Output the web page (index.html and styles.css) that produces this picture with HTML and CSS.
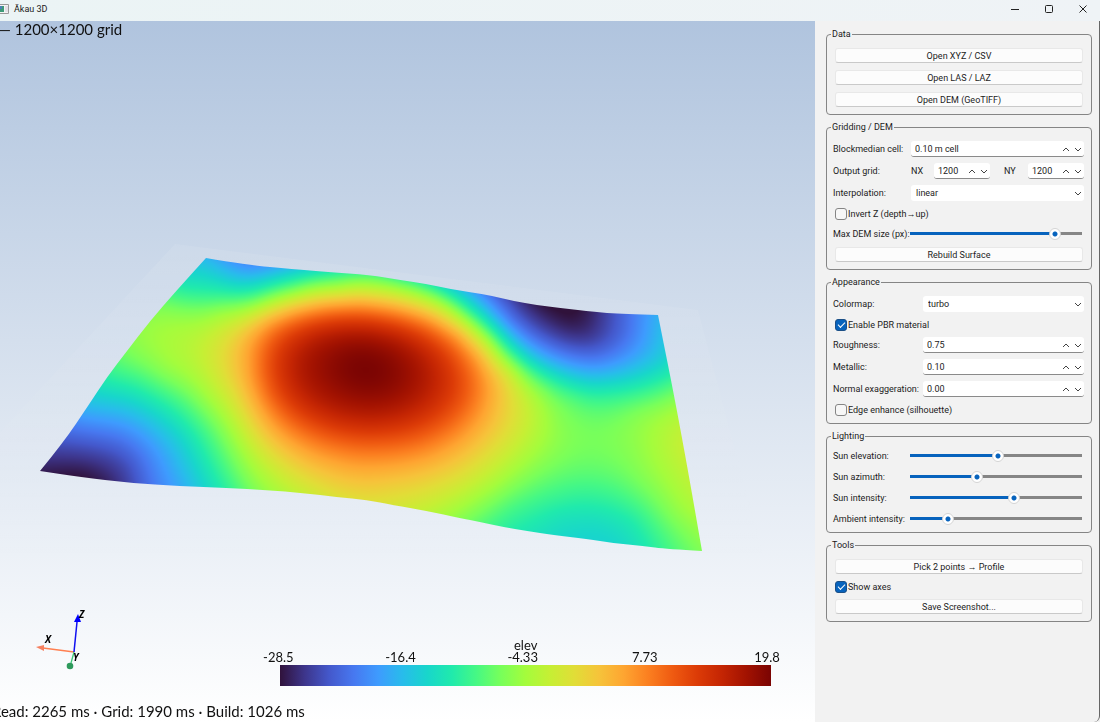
FILE: index.html
```html
<!DOCTYPE html>
<html lang="en">
<head>
<meta charset="utf-8">
<title>Ākau 3D</title>
<link rel="stylesheet" href="styles.css">
</head>
<body>
<header class="titlebar">
  <svg class="app-icon" width="10" height="10" viewBox="0 0 10 10" aria-hidden="true"><path d="M0 .5H8.500V9.500H0" fill="#f4f4f4" stroke="#999"/><path d="M0 2H4V8H0Z" fill="#3d9a78"/><path d="M0 2H2V5H0Z" fill="#4a7fb5"/><path d="M5 2H8V8H5Z" fill="#e2dfe6"/></svg>
  <h1 class="title">Ākau 3D</h1>
  <div class="window-buttons">
    <button class="window-button" aria-label="Minimize"><svg width="10" height="10" viewBox="0 0 10 10"><path d="M1 5.500H9"/></svg></button>
    <button class="window-button" aria-label="Maximize"><svg width="10" height="10" viewBox="0 0 10 10"><rect x="1.500" y="1.500" width="7" height="7" rx="1"/></svg></button>
    <button class="window-button" aria-label="Close"><svg width="10" height="10" viewBox="0 0 10 10"><path d="M1.500 1.500L8.500 8.500M8.500 1.500L1.500 8.500"/></svg></button>
  </div>
</header>
<main class="workspace">
  <section class="viewport" aria-label="3D view">
    <canvas class="scene" id="scene" width="815" height="701"></canvas>
    <p class="caption">— 1200×1200 grid</p>
    <svg class="axes" width="60" height="70" viewBox="30 606 60 70" aria-label="Axes">
      <path d="M74 652L43 648" stroke="#ff7f50" stroke-width="1.300"/>
      <path d="M36 647L44 645V651Z" fill="#f58060"/>
      <path d="M74 652L71 663" stroke="#3cc878" stroke-width="1.300"/>
      <circle cx="70" cy="666" r="3.300" fill="#2e9a5c"/>
      <path d="M74 652L77 622" stroke="#1010f0" stroke-width="1.500"/>
      <path d="M78 614L81 622H74Z" fill="#0000ff"/>
      <text x="45" y="643">X</text><text x="79" y="618">Z</text><text x="73" y="661">Y</text>
    </svg>
    <div class="scalebar">
      <div class="scalebar-title">elev</div>
      <div class="ticks"><span>-28.5</span><span>-16.4</span><span>-4.33</span><span>7.73</span><span>19.8</span></div>
      <div class="ramp"></div>
    </div>
    <p class="status">Read: 2265 ms · Grid: 1990 ms · Build: 1026 ms</p>
  </section>
  <aside class="panel">
    <fieldset class="group buttons-group">
      <legend>Data</legend>
      <button class="button">Open XYZ / CSV</button>
      <button class="button">Open LAS / LAZ</button>
      <button class="button">Open DEM (GeoTIFF)</button>
    </fieldset>
    <fieldset class="group">
      <legend>Gridding / DEM</legend>
      <div class="row"><label for="cell">Blockmedian cell:</label>
        <div class="spin"><input id="cell" value="0.10 m cell"><svg class="arrows" viewBox="0 0 20 8"><path d="M1 6L4 3L7 6M13 3L16 6L19 3"/></svg></div></div>
      <div class="row"><span>Output grid:</span>
        <div class="pair">
          <label for="nx">NX</label><div class="spin"><input id="nx" value="1200"><svg class="arrows" viewBox="0 0 20 8"><path d="M1 6L4 3L7 6M13 3L16 6L19 3"/></svg></div>
          <label class="second" for="ny">NY</label><div class="spin"><input id="ny" value="1200"><svg class="arrows" viewBox="0 0 20 8"><path d="M1 6L4 3L7 6M13 3L16 6L19 3"/></svg></div>
        </div></div>
      <div class="row"><label for="interp">Interpolation:</label>
        <div class="combo"><select id="interp"><option>linear</option></select><svg class="arrow" viewBox="0 0 8 8"><path d="M1 3L4 6L7 3"/></svg></div></div>
      <label class="check"><input type="checkbox">Invert Z (depth→up)</label>
      <div class="row slider-row"><label for="dem">Max DEM size (px):</label><input class="slider" id="dem" type="range" value="87" style="--fill:87%"></div>
      <button class="button">Rebuild Surface</button>
    </fieldset>
    <fieldset class="group wide-labels">
      <legend>Appearance</legend>
      <div class="row"><label for="cmap">Colormap:</label>
        <div class="combo"><select id="cmap"><option>turbo</option></select><svg class="arrow" viewBox="0 0 8 8"><path d="M1 3L4 6L7 3"/></svg></div></div>
      <label class="check"><input type="checkbox" checked>Enable PBR material</label>
      <div class="row"><label for="rough">Roughness:</label>
        <div class="spin"><input id="rough" value="0.75"><svg class="arrows" viewBox="0 0 20 8"><path d="M1 6L4 3L7 6M13 3L16 6L19 3"/></svg></div></div>
      <div class="row"><label for="metal">Metallic:</label>
        <div class="spin"><input id="metal" value="0.10"><svg class="arrows" viewBox="0 0 20 8"><path d="M1 6L4 3L7 6M13 3L16 6L19 3"/></svg></div></div>
      <div class="row"><label for="exag">Normal exaggeration:</label>
        <div class="spin"><input id="exag" value="0.00"><svg class="arrows" viewBox="0 0 20 8"><path d="M1 6L4 3L7 6M13 3L16 6L19 3"/></svg></div></div>
      <label class="check"><input type="checkbox">Edge enhance (silhouette)</label>
    </fieldset>
    <fieldset class="group lighting">
      <legend>Lighting</legend>
      <div class="row slider-row"><label for="elev">Sun elevation:</label><input class="slider" id="elev" type="range" value="51" style="--fill:51%"></div>
      <div class="row slider-row"><label for="azim">Sun azimuth:</label><input class="slider" id="azim" type="range" value="38" style="--fill:38%"></div>
      <div class="row slider-row"><label for="sun">Sun intensity:</label><input class="slider" id="sun" type="range" value="61" style="--fill:61%"></div>
      <div class="row slider-row"><label for="amb">Ambient intensity:</label><input class="slider" id="amb" type="range" value="20" style="--fill:20%"></div>
    </fieldset>
    <fieldset class="group">
      <legend>Tools</legend>
      <button class="button">Pick 2 points → Profile</button>
      <label class="check"><input type="checkbox" checked>Show axes</label>
      <button class="button">Save Screenshot...</button>
    </fieldset>
  </aside>
</main>
<script src="scene.js"></script>
</body>
</html>
```
FILE: styles.css
```css
* { box-sizing: border-box; }
body {
  margin: 0;
  min-height: 100vh;
  display: flex;
  flex-direction: column;
  background: #f2f2f2;
  color: #1c1c1c;
  font: 9px/12px "Roboto", "Open Sans", sans-serif;
}
input, select, button { font: inherit; color: inherit; margin: 0; }
svg { fill: none; }
p { margin: 0; }

.titlebar {
  display: flex;
  align-items: center;
  height: 21px;
  padding-bottom: 3px;
  background: linear-gradient(90deg, #ebf4f5, #eff3f6);
}
.app-icon { flex: none; }
.title { margin: 0 0 0 4px; font-size: 9px; font-weight: 400; }
.window-buttons { display: flex; margin-left: auto; }
.window-button {
  display: grid;
  place-items: center;
  width: 34px;
  height: 18px;
  padding: 0;
  border: 0;
  background: none;
  stroke: #222;
}

.workspace { flex: 1; display: flex; }
.viewport {
  position: relative;
  flex: 1;
  overflow: hidden;
  background: linear-gradient(#b0c4de, #fff);
  font: 15px/18px "Lato", sans-serif;
  color: #111;
}
.scene { position: absolute; inset: 0; width: 100%; height: 100%; }
.caption, .status { position: absolute; white-space: nowrap; }
.caption { top: -1px; left: -1px; }
.status { bottom: 2px; left: -8px; }
.axes { position: absolute; left: 30px; bottom: 46px; }
.axes text { font: italic bold 10px "Open Sans", sans-serif; fill: #000; }
.scalebar { position: absolute; left: 34.4%; right: 5.4%; bottom: 36px; }
.scalebar-title { text-align: center; font-size: 13px; line-height: 10px; }
.ticks {
  display: flex;
  justify-content: space-between;
  margin: 0 -16px 0 -22px;
  font-size: 13px;
  line-height: 15px;
  text-align: center;
}
.ticks span { width: 40px; }
.ramp {
  height: 21px;
  background: linear-gradient(90deg, #30123b, #3d358b 5%, #4458cb 10%, #4778f0 15%, #3e9bfe 20%, #28bceb 25%, #18d6cb 30%, #20eaac 35%, #46f884 40%, #78ff5a 45%, #a4fc3c 50%, #c6ef34 55%, #e1dd37 60%, #f6c33a 65%, #fea531 70%, #fb7f20 75%, #ef5a11 80%, #dc3b07 85%, #c42503 90%, #a21201 95%, #7a0403);
}

.panel {
  flex: none;
  width: 285px;
  padding: 7px 7px 7px 11px;
  border-right: 1px solid #666;
  border-bottom-right-radius: 6px;
  display: flex;
  flex-direction: column;
  gap: 6px;
}
.group {
  display: flex;
  flex-direction: column;
  gap: 6px;
  min-width: 0;
  margin: 0;
  padding: 8px 7px 7px 6px;
  border: 1px solid #858585;
  border-radius: 4px;
}
.buttons-group { gap: 7px; }
.lighting { padding-top: 6px; padding-bottom: 6px; }
legend { margin-left: -2px; padding: 0 1px; line-height: 12px; }
.button {
  height: 15px;
  margin: 0 1px 0 2px;
  padding: 0;
  border: 1px solid #e8e8e8;
  border-bottom-color: #c9c9c9;
  border-radius: 3px;
  background: #fcfcfc;
  line-height: 12px;
}
.row {
  display: grid;
  grid-template-columns: 78px 1fr;
  align-items: center;
  height: 16px;
  white-space: nowrap;
}
.wide-labels .row { grid-template-columns: 90px 1fr; }
.slider-row { height: 15px; grid-template-columns: 77px 1fr; }
.pair { display: grid; grid-template-columns: 23px 1fr 38px 1fr; align-items: center; }
.second { padding-left: 14px; }
.spin, .combo {
  display: flex;
  align-items: center;
  min-width: 0;
  height: 16px;
  border-radius: 3px;
  background: #fff;
}
.spin { border-bottom: 1px solid #8a8a8a; }
.spin input {
  flex: 1;
  width: 0;
  height: 15px;
  padding: 0 0 0 4px;
  border: 0;
  background: none;
}
.arrows { width: 20px; height: 8px; margin-right: 2px; stroke: #444; flex: none; }
.arrow { width: 8px; height: 8px; margin-right: 2px; stroke: #444; flex: none; }
.combo select {
  flex: 1;
  height: 16px;
  padding: 0 0 0 5px;
  border: 0;
  background: none;
  appearance: none;
}
.check { display: flex; align-items: center; height: 13px; padding-left: 2px; white-space: nowrap; }
.check input {
  appearance: none;
  display: grid;
  place-items: center;
  width: 12px;
  height: 12px;
  margin-right: 1px;
  border: 1px solid #858585;
  border-radius: 3px;
  background: #f7f7f7;
}
.check input:checked { background: #0763bd; border-color: #1c4f86; }
.check input:checked::before {
  content: "";
  width: 6px;
  height: 3px;
  margin-bottom: 2px;
  border: solid #fff;
  border-width: 0 0 1px 1px;
  transform: rotate(-45deg);
}
.slider {
  appearance: none;
  width: calc(100% - 2px);
  height: 12px;
  background: linear-gradient(90deg, #0763bd var(--fill), #868686 var(--fill)) center / 100% 3px no-repeat;
}
.slider::-webkit-slider-thumb {
  appearance: none;
  width: 12px;
  height: 12px;
  border: 1px solid #d5d5d5;
  border-radius: 50%;
  background: radial-gradient(circle, #0763bd 2px, #fff 3px);
}
```
FILE: scene.js
```js
// Elevation samples in view space: x, y, normalised height.
const samples = [
  207,259,.26, 247,267,.19, 293,270,.28, 327,273,.36, 370,275,.42, 187,282,.32, 177,293,.38,
  163,307,.46, 150,320,.48, 137,337,.48, 127,357,.44, 117,368,.40, 107,377,.36, 97,390,.31,
  88,403,.26, 80,417,.20, 73,427,.15, 63,440,.10, 53,453,.06, 40,470,.02, 80,475,0,
  103,479,.02, 130,483,.08, 153,485,.16, 180,486,.22, 207,487,.31, 227,488,.37, 247,489,.44,
  267,491,.49, 303,493,.55, 337,497,.59, 367,500,.60,
  203,280,.32, 237,290,.34, 253,300,.43, 207,300,.40, 253,283,.30, 293,290,.45, 337,287,.49,
  353,280,.46, 180,320,.49, 220,313,.50, 220,350,.59, 187,350,.52, 153,340,.49, 167,367,.49,
  137,380,.38, 130,397,.31, 120,413,.24, 103,423,.19, 120,440,.14, 87,453,.07, 127,467,.08,
  153,447,.20, 163,427,.28, 180,440,.29, 167,407,.35, 187,397,.43, 207,397,.50, 220,427,.46,
  233,447,.47, 203,453,.35, 240,420,.56, 233,393,.59, 273,473,.54,
  400,281,.41, 427,285,.37, 450,290,.31, 470,293,.24, 493,297,.15, 513,301,.08, 537,306,.02,
  560,308,0, 587,311,.02, 607,312,.08, 627,313,.14, 643,314,.19, 658,315,.24,
  662,337,.26, 665,357,.29, 668,373,.34, 672,390,.43, 675,407,.49, 680,427,.54, 683,450,.55,
  688,473,.54, 693,500,.52, 697,523,.49, 701,550,.46,
  393,505,.58, 427,511,.54, 460,517,.47, 480,522,.42, 503,526,.37, 527,531,.34, 553,534,.315,
  587,539,.30, 613,542,.30, 643,546,.34, 667,548,.40,
  373,291,.55, 427,293,.46, 443,307,.53, 477,340,.58, 500,407,.64, 493,447,.60,
  460,477,.59, 510,447,.56, 527,407,.55, 510,373,.56, 487,340,.51, 470,320,.46, 457,300,.37,
  483,320,.36, 470,307,.33, 493,313,.22, 510,320,.15, 533,320,.07, 553,313,.01, 570,318,0,
  567,337,.06, 587,333,.04, 590,350,.11, 607,340,.10, 627,327,.13, 627,347,.17, 643,337,.20,
  653,357,.26, 600,363,.18, 560,353,.16, 540,340,.14, 527,337,.17, 513,340,.27, 527,360,.32,
  507,350,.39, 520,367,.44, 547,363,.26, 560,373,.29, 593,377,.26, 627,373,.27, 607,390,.35,
  643,387,.36, 627,407,.43, 573,397,.41, 593,417,.43, 543,390,.46, 560,420,.46, 600,440,.45,
  643,413,.47, 653,440,.50, 633,447,.47, 560,453,.46, 527,453,.51, 593,473,.42, 543,480,.43,
  643,480,.46, 670,473,.51, 493,487,.50, 460,500,.52, 393,487,.62, 427,487,.60, 510,507,.40,
  560,500,.375, 560,517,.325, 593,507,.35, 593,523,.31, 633,520,.35, 627,493,.41, 653,507,.43,
  677,513,.48, 673,537,.42
];

// Closed contours around the central summit.
const contours = [
  [.7, 249,363, 253,338, 268,322, 293,312, 325,305, 360,303, 395,308, 430,319, 458,335, 477,357,
    487,380, 486,403, 473,427, 449,447, 415,461, 375,466, 335,461, 300,447, 272,425, 255,395],
  [.8, 265,367, 270,345, 285,329, 307,320, 335,315, 367,315, 397,320, 425,330, 447,346, 461,367,
    466,387, 461,405, 444,423, 415,437, 380,442, 345,440, 315,431, 289,415, 271,393],
  [.9, 291,367, 300,346, 319,333, 345,328, 370,328, 398,335, 420,349, 433,368, 434,387, 422,404,
    400,416, 370,421, 340,417, 314,405, 297,388],
  [.96, 322,367, 332,351, 354,343, 378,346, 399,358, 406,376, 396,392, 370,399, 345,394, 328,382],
  [1, 366,371]
];
for (const [t, ...line] of contours) {
  for (let i = 0; i < line.length; i += 2) samples.push(line[i], line[i + 1], t);
}

const ramp = ['30123b','3d358b','4458cb','4778f0','3e9bfe','28bceb','18d6cb','20eaac','46f884',
  '78ff5a','a4fc3c','c6ef34','e1dd37','f6c33a','fea531','fb7f20','ef5a11','dc3b07','c42503',
  'a21201','7a0403'].map(h => [0, 2, 4].map(i => parseInt(h.substr(i, 2), 16)));

function colour(t) {
  const p = Math.min(.9999, Math.max(0, t)) * (ramp.length - 1);
  const i = Math.floor(p);
  return ramp[i].map((c, k) => c + (ramp[i + 1][k] - c) * (p - i));
}

const pts = [];
for (let i = 0; i < samples.length; i += 3) {
  pts.push([samples[i] / 100, samples[i + 1] / 100, samples[i + 2]]);
}
const kernel = r2 => r2 > 0 ? r2 * Math.log(r2) : 0;

// Smoothed thin-plate spline through the samples.
function fit() {
  const n = pts.length, m = n + 3, a = [];
  for (let i = 0; i < m; i++) a.push(new Float64Array(m + 1));
  for (let i = 0; i < n; i++) {
    for (let j = 0; j < n; j++) {
      a[i][j] = kernel((pts[i][0] - pts[j][0]) ** 2 + (pts[i][1] - pts[j][1]) ** 2);
    }
    a[i][i] += .12;
    [1, pts[i][0], pts[i][1]].forEach((v, k) => { a[i][n + k] = v; a[n + k][i] = v; });
    a[i][m] = pts[i][2];
  }
  for (let c = 0; c < m; c++) {
    let p = c;
    for (let r = c + 1; r < m; r++) if (Math.abs(a[r][c]) > Math.abs(a[p][c])) p = r;
    [a[c], a[p]] = [a[p], a[c]];
    for (let r = c + 1; r < m; r++) {
      const f = a[r][c] / a[c][c];
      if (f) for (let k = c; k <= m; k++) a[r][k] -= f * a[c][k];
    }
  }
  const w = new Float64Array(m);
  for (let r = m - 1; r >= 0; r--) {
    let s = a[r][m];
    for (let k = r + 1; k < m; k++) s -= a[r][k] * w[k];
    w[r] = s / a[r][r];
  }
  return w;
}

const weights = fit();
function height(x, y) {
  const n = pts.length;
  x /= 100; y /= 100;
  let s = weights[n] + weights[n + 1] * x + weights[n + 2] * y;
  for (let i = 0; i < n; i++) s += weights[i] * kernel((x - pts[i][0]) ** 2 + (y - pts[i][1]) ** 2);
  return s;
}

const X0 = 36, Y0 = 252, W = 672, H = 304, STEP = 4;
const cols = W / STEP + 1, rows = H / STEP + 1;
const grid = new Float64Array(cols * rows);
for (let j = 0; j < rows; j++) {
  for (let i = 0; i < cols; i++) grid[j * cols + i] = height(X0 + i * STEP, Y0 + j * STEP);
}

const layer = document.createElement('canvas');
layer.width = W;
layer.height = H;
const lctx = layer.getContext('2d');
const image = lctx.createImageData(W, H);
for (let y = 0; y < H; y++) {
  for (let x = 0; x < W; x++) {
    const i = Math.floor(x / STEP), j = Math.floor(y / STEP);
    const u = x / STEP - i, v = y / STEP - j, k = j * cols + i;
    const t = (grid[k] * (1 - u) + grid[k + 1] * u) * (1 - v)
      + (grid[k + cols] * (1 - u) + grid[k + cols + 1] * u) * v;
    const c = colour(t), o = (y * W + x) * 4;
    image.data[o] = c[0];
    image.data[o + 1] = c[1];
    image.data[o + 2] = c[2];
    image.data[o + 3] = 255;
  }
}
lctx.putImageData(image, 0, 0);

const ctx = document.getElementById('scene').getContext('2d');
ctx.translate(0, -21);

// Pale ground plane behind the surface.
const haze = ctx.createLinearGradient(0, 240, 0, 560);
haze.addColorStop(0, 'rgba(255,255,255,.09)');
haze.addColorStop(1, 'rgba(255,255,255,0)');
ctx.fillStyle = haze;
ctx.fill(new Path2D('M175 244L698 310L775 600L0 560V432Z'));

// Surface outline, smoothed through the edge points of each side.
const sides = [
  [[206,258],[247,265],[293,269],[327,272],[370,275],[400,280],[427,284],[450,289],[470,292],
   [493,296],[513,301],[537,305],[560,308],[587,311],[607,313],[627,314],[658,315]],
  [[658,315],[664,345],[672,385],[680,427],[690,482],[702,551]],
  [[702,551],[667,549],[643,546],[613,543],[587,539],[553,535],[527,531],[503,527],[480,522],
   [460,518],[427,511],[393,505],[367,500],[337,497],[303,493],[267,490],[227,488],[180,486],
   [130,483],[80,477],[40,471]],
  [[40,471],[63,443],[88,406],[107,377],[127,351],[150,321],[177,290],[206,258]]
];
const outline = new Path2D();
outline.moveTo(206, 258);
for (const s of sides) {
  for (let i = 1; i < s.length - 1; i++) {
    outline.quadraticCurveTo(s[i][0], s[i][1], (s[i][0] + s[i + 1][0]) / 2, (s[i][1] + s[i + 1][1]) / 2);
  }
  outline.lineTo(...s[s.length - 1]);
}
outline.closePath();
ctx.clip(outline);
ctx.drawImage(layer, X0, Y0);
```
